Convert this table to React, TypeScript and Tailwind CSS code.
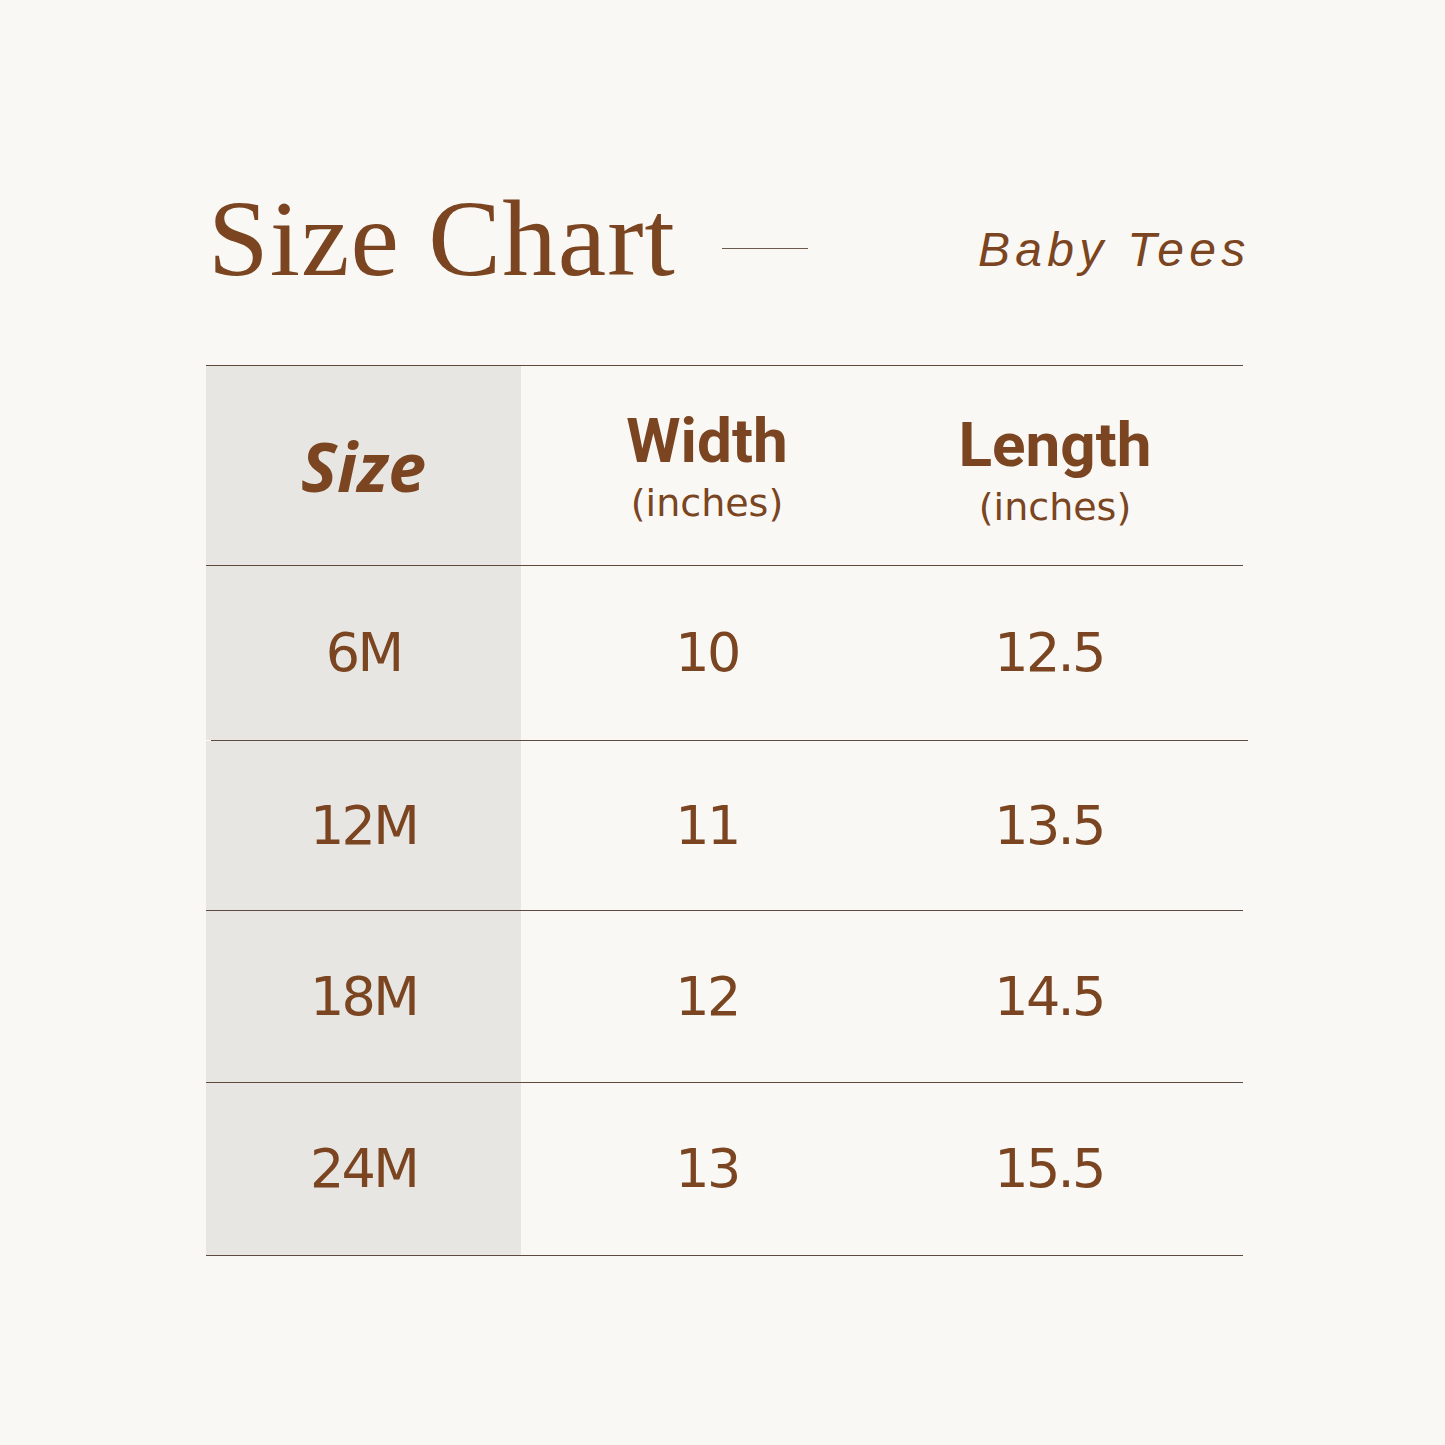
import React from 'react';

const rows = [
  { size: '6M', width: '10', length: '12.5', h: 'h-[174px]' },
  { size: '12M', width: '11', length: '13.5', h: 'h-[169px]' },
  { size: '18M', width: '12', length: '14.5', h: 'h-[171px]' },
  { size: '24M', width: '13', length: '15.5', h: 'h-[172px]' },
];

const numFont = "font-['DejaVu_Sans',sans-serif] text-[54px] leading-none tracking-[-0.05em]";

export default function App() {
  return (
    <div className="w-[1445px] h-[1445px] bg-[#f9f8f5] text-[#7a4520] pt-[184px]">
      {/* title */}
      <div className="flex items-start">
        <h1 className="ml-[208px] font-['Liberation_Serif',serif] text-[109px] leading-none font-normal tracking-[0.01em]">
          Size Chart
        </h1>
        <div className="ml-[46px] mt-[64px] w-[86px] h-px bg-[#6b5a4e]" />
        <span className="ml-[170px] mt-[42px] font-['Liberation_Sans',sans-serif] italic text-[48px] leading-none tracking-[0.11em]">
          Baby Tees
        </span>
      </div>

      {/* table */}
      <div className="ml-[206px] mt-[72px] w-[1037px]">
        <div className="h-px bg-[#5d4b3f]" />
        <div className="grid grid-cols-[315px_372px_318px_1fr] h-[199px]">
          <div className="bg-[#e8e6e2] flex items-center justify-center">
            <span className="font-['Open_Sans',sans-serif] font-bold italic text-[68px] leading-none">Size</span>
          </div>
          <div className="flex flex-col items-center justify-center">
            <span className="font-['Roboto',sans-serif] font-bold text-[62px] leading-none">Width</span>
            <span className="mt-[12px] font-['DejaVu_Sans',sans-serif] text-[38px] leading-none">(inches)</span>
          </div>
          <div className="flex flex-col items-center justify-center pt-[8px] pl-[6px]">
            <span className="font-['Roboto',sans-serif] font-bold text-[62px] leading-none">Length</span>
            <span className="mt-[12px] font-['DejaVu_Sans',sans-serif] text-[38px] leading-none">(inches)</span>
          </div>
          <div />
        </div>
        {rows.map((r, i) => (
          <React.Fragment key={r.size}>
            <div className={i === 1 ? 'h-px bg-[#5d4b3f] ml-[5px] -mr-[5px]' : 'h-px bg-[#5d4b3f]'} />
            <div className={`grid grid-cols-[315px_372px_318px_1fr] ${r.h}`}>
              <div className="bg-[#e8e6e2] flex items-center justify-center">
                <span className={numFont}>{r.size}</span>
              </div>
              <div className="flex items-center justify-center">
                <span className={numFont}>{r.width}</span>
              </div>
              <div className="flex items-center justify-center pr-[6px]">
                <span className={numFont}>{r.length}</span>
              </div>
              <div />
            </div>
          </React.Fragment>
        ))}
        <div className="h-px bg-[#5d4b3f]" />
      </div>
    </div>
  );
}
